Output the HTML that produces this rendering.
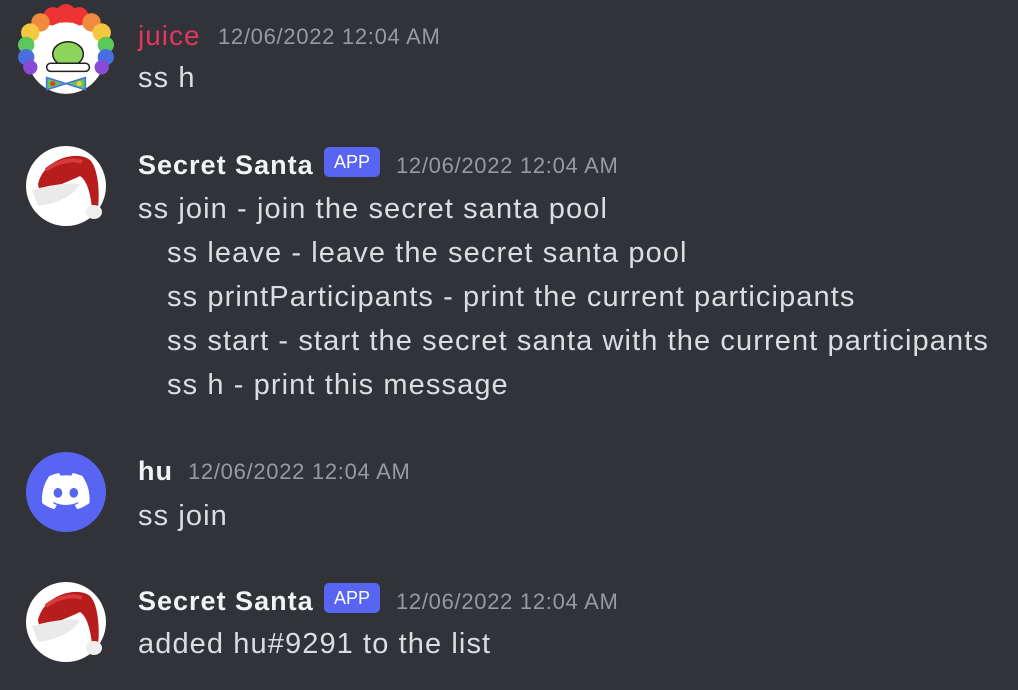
<!DOCTYPE html>
<html><head><meta charset="utf-8"><style>
body{margin:0;width:1018px;height:690px;background:#313338;overflow:hidden;position:relative;font-family:"Liberation Sans",sans-serif}
.t{position:absolute;white-space:nowrap;line-height:32px}
.n{font-size:27px;font-weight:bold;color:#f2f3f5;letter-spacing:1px}
.ts{font-size:22px;color:#949ba4;letter-spacing:0.7px}
.m{font-size:29px;color:#dbdee1;letter-spacing:1.1px}
.b{position:absolute;background:#5865f2;color:#fff;border-radius:5px;font-size:18px;width:56px;height:30px;line-height:30px;text-align:center}
svg{position:absolute}
</style></head><body>
<svg style="left:16px;top:2px" width="100" height="100" viewBox="0 0 98 98">
<circle cx="49" cy="52" r="38" fill="#fff"/>
<g>
<circle cx="49" cy="12" r="10" fill="#e33"/><circle cx="36" cy="14" r="9" fill="#e33"/><circle cx="62" cy="14" r="9" fill="#e33"/>
<circle cx="24" cy="20" r="9" fill="#f08a3c"/><circle cx="74" cy="20" r="9" fill="#f08a3c"/>
<circle cx="14" cy="30" r="9" fill="#f5c842"/><circle cx="84" cy="30" r="9" fill="#f5c842"/>
<circle cx="10" cy="42" r="8" fill="#5bc85b"/><circle cx="88" cy="42" r="8" fill="#5bc85b"/>
<circle cx="10" cy="54" r="8" fill="#4a6ee0"/><circle cx="88" cy="54" r="8" fill="#4a6ee0"/>
<circle cx="14" cy="64" r="7" fill="#8a4ad8"/><circle cx="84" cy="64" r="7" fill="#8a4ad8"/>
</g>
<circle cx="49" cy="50" r="30" fill="#fff"/>
<ellipse cx="51" cy="51" rx="15" ry="12" fill="#8dd45c" stroke="#222" stroke-width="1.5"/>
<rect x="30" y="60" width="42" height="8" rx="4" fill="#fff" stroke="#222" stroke-width="1.5"/>
<path d="M30 86 L49 80 L68 86 L68 74 L49 80 L30 74Z" fill="#5bc85b" stroke="#4a6ee0" stroke-width="1.5"/>
<circle cx="36" cy="80" r="2.5" fill="#e33"/><circle cx="62" cy="80" r="2.5" fill="#f5c842"/>
</svg>
<div class="t n" style="left:138px;top:20px;color:#e0365f;font-weight:normal;font-size:28px">juice</div>
<div class="t ts" style="left:218px;top:21px">12/06/2022 12:04 AM</div>
<div class="t m" style="left:138px;top:62px">ss h</div>

<svg style="left:26px;top:146px" width="80" height="80" viewBox="0 0 80 80">
<circle cx="40" cy="40" r="40" fill="#fff"/>
<path d="M12 38 C18 12 52 4 64 14 C72 22 74 46 72 62 L66 62 C64 44 60 34 54 30 C46 34 30 40 14 48Z" fill="#b81d1d"/>
<path d="M20 24 C30 16 46 12 56 16" stroke="#d63a3a" stroke-width="4" fill="none"/>
<ellipse cx="68" cy="66" rx="8" ry="7" fill="#eee"/>
<path d="M6 44 C20 40 40 36 54 38 C48 50 30 58 12 60Z" fill="#eaeaea"/>
</svg>
<div class="t n" style="left:138px;top:149px">Secret Santa</div>
<div class="b" style="left:324px;top:147px">APP</div>
<div class="t ts" style="left:396px;top:150px">12/06/2022 12:04 AM</div>
<div class="t m" style="left:138px;top:193px">ss join - join the secret santa pool</div>
<div class="t m" style="left:167px;top:237px">ss leave - leave the secret santa pool</div>
<div class="t m" style="left:167px;top:281px">ss printParticipants - print the current participants</div>
<div class="t m" style="left:167px;top:325px">ss start - start the secret santa with the current participants</div>
<div class="t m" style="left:167px;top:369px">ss h - print this message</div>

<svg style="left:26px;top:452px" width="80" height="80" viewBox="0 0 80 80">
<circle cx="40" cy="40" r="40" fill="#5865f2"/>
<g transform="translate(16,21) scale(0.375)">
<path fill="#fff" d="M108 8.1A105 105 0 0 0 81.6 0a72 72 0 0 0-3.4 7 97.7 97.7 0 0 0-29.100 0A72 72 0 0 0 45.6 0 105.9 105.9 0 0 0 19.4 8.1C2.8 32.6-1.7 56.6.5 80.2a105.7 105.7 0 0 0 32.2 16.2 77.7 77.7 0 0 0 6.9-11.2 68.4 68.4 0 0 1-10.9-5.2c.9-.7 1.800-1.3 2.6-2a75.6 75.6 0 0 0 64.3 0c.9.7 1.7 1.4 2.6 2a68.7 68.7 0 0 1-10.9 5.2 77 77 0 0 0 6.9 11.2 105.3 105.3 0 0 0 32.2-16.2c2.6-27.4-4.5-51.2-18.9-72.1ZM42.5 65.7c-6.3 0-11.4-5.700-11.4-12.8s5-12.8 11.4-12.8 11.5 5.8 11.4 12.8c0 7-5 12.8-11.4 12.8Zm42.2 0c-6.3 0-11.4-5.7-11.4-12.8s5-12.8 11.4-12.8 11.5 5.8 11.4 12.8c0 7-5 12.8-11.4 12.8Z"/>
</g>
</svg>
<div class="t n" style="left:138px;top:455px">hu</div>
<div class="t ts" style="left:188px;top:456px">12/06/2022 12:04 AM</div>
<div class="t m" style="left:138px;top:500px">ss join</div>

<svg style="left:26px;top:582px" width="80" height="80" viewBox="0 0 80 80">
<circle cx="40" cy="40" r="40" fill="#fff"/>
<path d="M12 38 C18 12 52 4 64 14 C72 22 74 46 72 62 L66 62 C64 44 60 34 54 30 C46 34 30 40 14 48Z" fill="#b81d1d"/>
<path d="M20 24 C30 16 46 12 56 16" stroke="#d63a3a" stroke-width="4" fill="none"/>
<ellipse cx="68" cy="66" rx="8" ry="7" fill="#eee"/>
<path d="M6 44 C20 40 40 36 54 38 C48 50 30 58 12 60Z" fill="#eaeaea"/>
</svg>
<div class="t n" style="left:138px;top:585px">Secret Santa</div>
<div class="b" style="left:324px;top:583px">APP</div>
<div class="t ts" style="left:396px;top:586px">12/06/2022 12:04 AM</div>
<div class="t m" style="left:138px;top:628px">added hu#9291 to the list</div>
</body></html>
